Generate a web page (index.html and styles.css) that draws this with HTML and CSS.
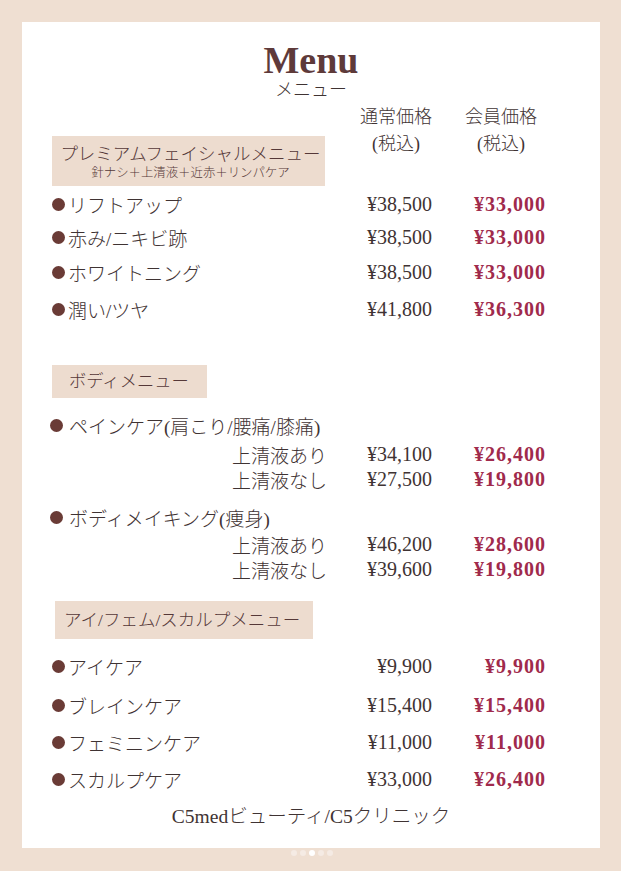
FILE: index.html
```html
<!DOCTYPE html>
<html lang="ja">
<head>
<meta charset="utf-8">
<title>Menu</title>
<link rel="stylesheet" href="styles.css">
</head>
<body>
<div class="page">
  <div class="card">
    <div class="head">
      <h1 class="title">Menu</h1>
      <div class="subtitle">メニュー</div>
    </div>

    <div class="section-head">
      <div class="cat-box cat-premium">
        <div class="cat-name">プレミアムフェイシャルメニュー</div>
        <div class="cat-sub">針ナシ＋上清液＋近赤＋リンパケア</div>
      </div>
      <div class="col-heads">
        <div class="col-head col-reg"><span>通常価格</span><span>(税込)</span></div>
        <div class="col-head col-mem"><span>会員価格</span><span>(税込)</span></div>
      </div>
    </div>

    <div class="group g-facial">
      <div class="row r-facial"><span class="name"><i class="dot"></i>リフトアップ</span><span class="p-reg">¥38,500</span><span class="p-mem">¥33,000</span></div>
      <div class="row r-facial r-tight"><span class="name"><i class="dot"></i>赤み/ニキビ跡</span><span class="p-reg">¥38,500</span><span class="p-mem">¥33,000</span></div>
      <div class="row r-facial"><span class="name"><i class="dot"></i>ホワイトニング</span><span class="p-reg">¥38,500</span><span class="p-mem">¥33,000</span></div>
      <div class="row r-facial r-loose"><span class="name"><i class="dot"></i>潤い/ツヤ</span><span class="p-reg">¥41,800</span><span class="p-mem">¥36,300</span></div>
    </div>

    <div class="cat-box cat-body"><div class="cat-name">ボディメニュー</div></div>

    <div class="group g-body">
      <div class="row r-main"><span class="name"><i class="dot dot-sp"></i>ペインケア(肩こり/腰痛/膝痛)</span></div>
      <div class="row r-sub r-first"><span class="name sub">上清液あり</span><span class="p-reg">¥34,100</span><span class="p-mem">¥26,400</span></div>
      <div class="row r-sub"><span class="name sub">上清液なし</span><span class="p-reg">¥27,500</span><span class="p-mem">¥19,800</span></div>
      <div class="row r-main r-gap"><span class="name"><i class="dot dot-sp"></i>ボディメイキング(痩身)</span></div>
      <div class="row r-sub"><span class="name sub">上清液あり</span><span class="p-reg">¥46,200</span><span class="p-mem">¥28,600</span></div>
      <div class="row r-sub"><span class="name sub">上清液なし</span><span class="p-reg">¥39,600</span><span class="p-mem">¥19,800</span></div>
    </div>

    <div class="cat-box cat-eye"><div class="cat-name">アイ/フェム/スカルプメニュー</div></div>

    <div class="group g-eye">
      <div class="row r-eye"><span class="name"><i class="dot"></i>アイケア</span><span class="p-reg">¥9,900</span><span class="p-mem">¥9,900</span></div>
      <div class="row r-eye r-loose"><span class="name"><i class="dot"></i>ブレインケア</span><span class="p-reg">¥15,400</span><span class="p-mem">¥15,400</span></div>
      <div class="row r-eye"><span class="name"><i class="dot"></i>フェミニンケア</span><span class="p-reg">¥11,000</span><span class="p-mem">¥11,000</span></div>
      <div class="row r-eye"><span class="name"><i class="dot"></i>スカルプケア</span><span class="p-reg">¥33,000</span><span class="p-mem">¥26,400</span></div>
    </div>

    <div class="footer">C5medビューティ/C5クリニック</div>
  </div>
  <div class="dots">
    <span class="pg"></span><span class="pg"></span><span class="pg pg-on"></span><span class="pg"></span><span class="pg"></span>
  </div>
</div>
</body>
</html>
```
FILE: styles.css
```css
html, body {
  margin: 0;
  background: #efdfd2;
}
body {
  font-family: "Liberation Serif", "Noto Sans CJK JP", serif;
  color: #3f3333;
}
.page {
  padding: 22px 21px 0 22px;
}
.card {
  background: #ffffff;
  height: 826px;
  box-sizing: border-box;
  padding: 0 54px 0 30px;
  display: flex;
  flex-direction: column;
}
.head {
  margin: 20px -54px 0 -30px;
  text-align: center;
}
.title {
  margin: 0;
  font-size: 38px;
  line-height: 36px;
  font-weight: bold;
  color: #5e3a3a;
}
.subtitle {
  margin-top: 3px;
  font-size: 18px;
  line-height: 18px;
  font-weight: 300;
  color: #3f3333;
}
.section-head {
  display: flex;
  align-items: flex-start;
  margin-top: 5px;
}
.cat-box {
  background: #eddccf;
  color: #553838;
  font-weight: 300;
  box-sizing: border-box;
}
.cat-premium {
  margin-top: 32px;
  width: 273px;
  height: 50px;
  padding: 7px 0 0 4px;
  text-align: center;
}
.cat-name {
  font-size: 17.5px;
  line-height: 22px;
  white-space: nowrap;
}
.cat-sub {
  font-size: 12.4px;
  line-height: 16px;
}
.col-heads {
  flex: 1;
  display: flex;
  justify-content: flex-end;
  gap: 33px;
  padding-right: 9px;
}
.col-head {
  width: 72px;
  display: flex;
  flex-direction: column;
  align-items: center;
  font-size: 18px;
  line-height: 27px;
  font-weight: 300;
  color: #3f3333;
}
.row {
  display: flex;
  align-items: center;
}
.name {
  flex: 1;
  display: flex;
  align-items: center;
  font-size: 19px;
  font-weight: 300;
  white-space: nowrap;
  color: #3f3333;
}
.name.sub {
  padding-left: 180px;
}
.dot {
  width: 13px;
  height: 13px;
  border-radius: 50%;
  background: #6a3b36;
  margin-right: 3px;
  flex: none;
}
.dot-sp {
  margin-left: -2px;
  margin-right: 6px;
}
.p-reg {
  width: 100px;
  text-align: right;
  font-size: 20px;
  color: #3f3333;
}
.p-mem {
  width: 114px;
  text-align: right;
  font-size: 20px;
  font-weight: bold;
  letter-spacing: 1px;
  color: #a02a4c;
}
.g-facial {
  margin-top: 1px;
}
.r-facial {
  height: 35px;
}
.r-tight {
  margin-top: -2px;
}
.r-loose {
  margin-top: 2px;
}
.cat-body {
  margin-top: 38px;
  width: 155px;
  height: 33px;
  padding-left: 17px;
  display: flex;
  align-items: center;
}
.cat-body .cat-name {
  font-size: 17.3px;
}
.g-body {
  margin-top: 12px;
}
.r-main {
  height: 30px;
}
.r-sub {
  height: 25px;
}
.r-first {
  margin-top: 2px;
}
.r-gap {
  margin-top: 10px;
}
.cat-eye {
  margin-top: 19px;
  margin-left: 3px;
  width: 258px;
  height: 38px;
  padding-left: 9px;
  display: flex;
  align-items: center;
}
.g-eye {
  margin-top: 9px;
}
.r-eye {
  height: 37px;
}
.r-eye .p-reg {
  width: 98px;
}
.footer {
  margin: 4px -54px 0 -30px;
  height: 30px;
  line-height: 30px;
  text-align: center;
  font-size: 19.5px;
  font-weight: 300;
  color: #3f3333;
}
.dots {
  display: flex;
  justify-content: center;
  gap: 3px;
  margin-top: 2px;
  padding-left: 2px;
}
.pg {
  width: 6px;
  height: 6px;
  border-radius: 50%;
  background: #f5ebe4;
}
.pg-on {
  background: #ffffff;
}
```
